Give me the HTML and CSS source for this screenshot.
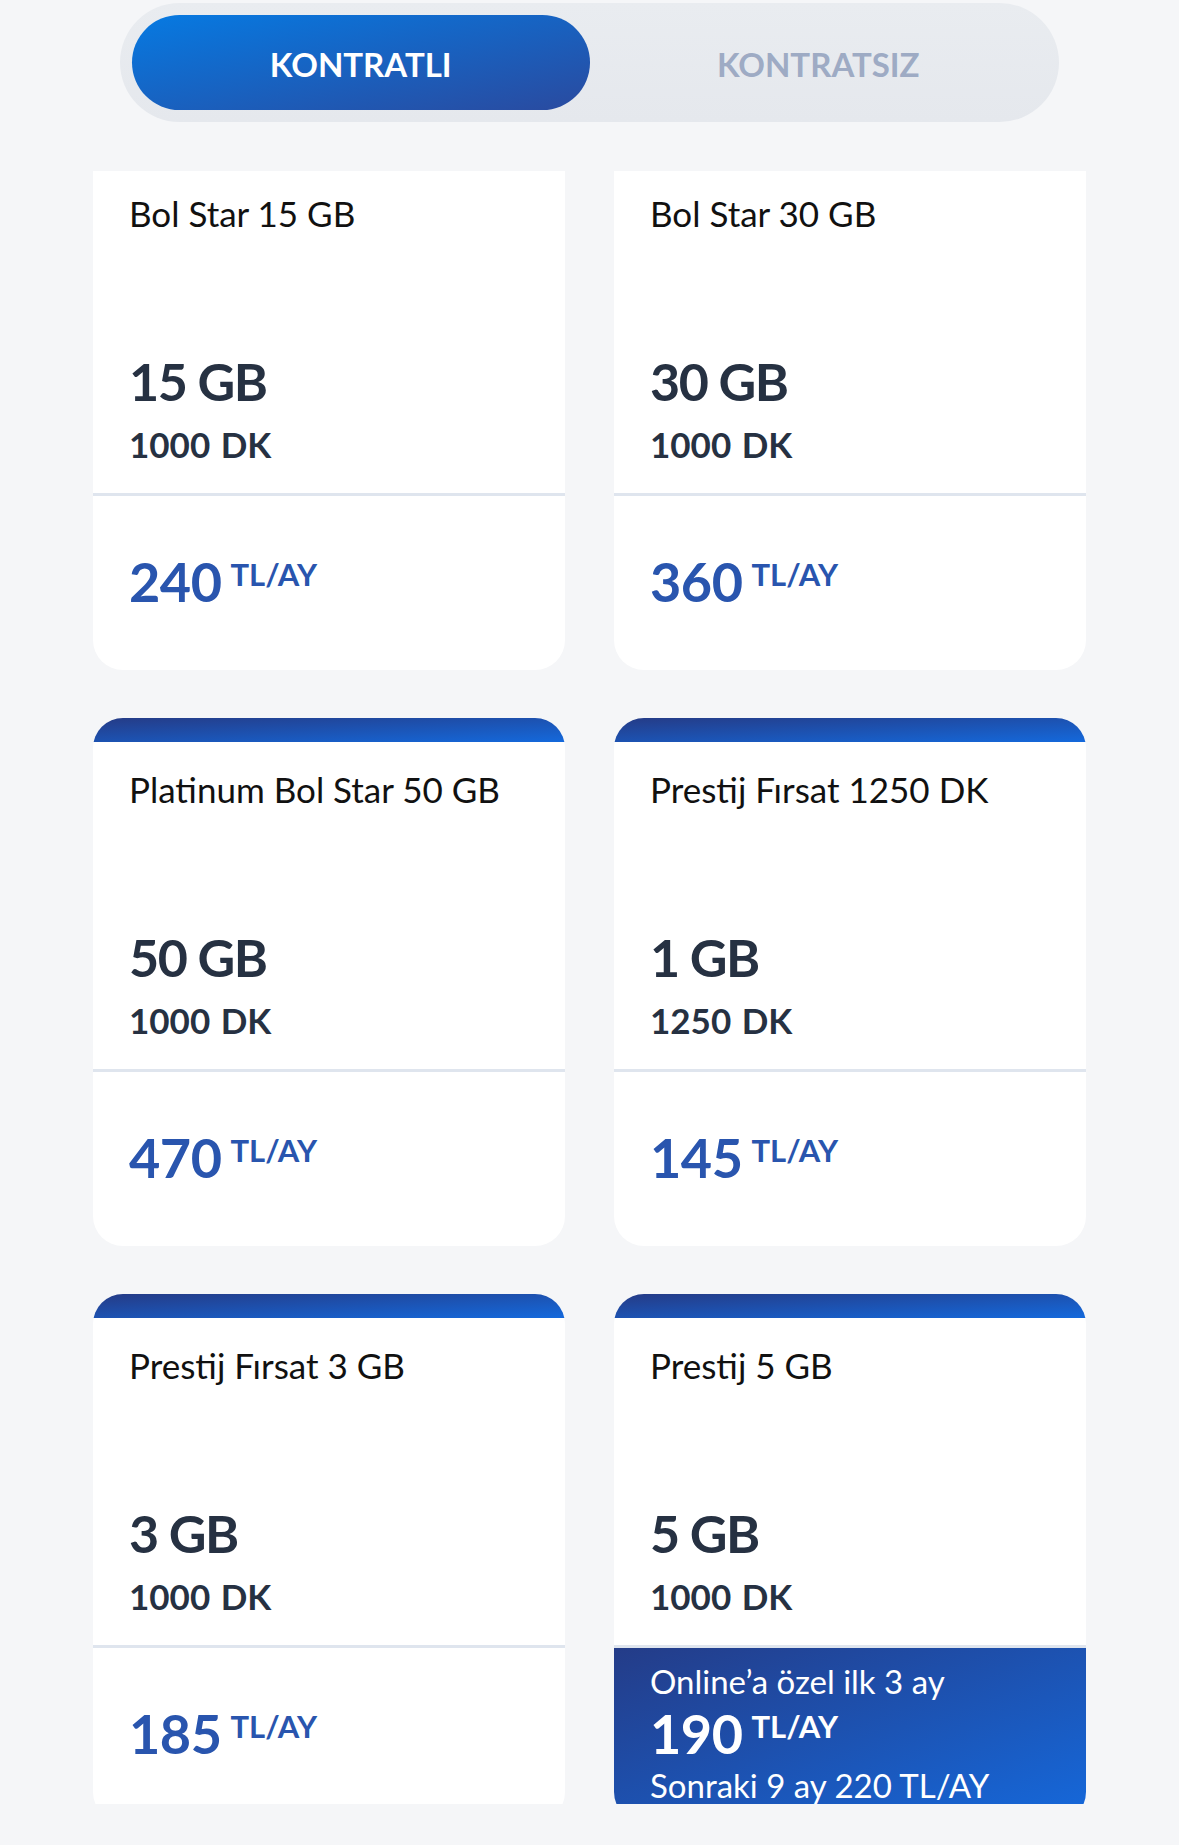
FILE: index.html
```html
<!DOCTYPE html>
<html lang="tr">
<head>
<meta charset="utf-8">
<title>Tarifeler</title>
<link rel="stylesheet" href="styles.css">
</head>
<body>
<div class="toggle">
  <div class="tab active">KONTRATLI</div>
  <div class="tab">KONTRATSIZ</div>
</div>
<div class="viewport">
  <div class="grid">
    <div class="card">
      <div class="card-bar"></div>
      <div class="card-top">
        <div class="title">Bol Star 15 GB</div>
        <div class="data">
          <div class="gb">15 GB</div>
          <div class="dk">1000 DK</div>
        </div>
      </div>
      <div class="card-price">
        <div class="price-line"><span class="amount">240</span><span class="unit">TL/AY</span></div>
      </div>
    </div>
    <div class="card">
      <div class="card-bar"></div>
      <div class="card-top">
        <div class="title">Bol Star 30 GB</div>
        <div class="data">
          <div class="gb">30 GB</div>
          <div class="dk">1000 DK</div>
        </div>
      </div>
      <div class="card-price">
        <div class="price-line"><span class="amount">360</span><span class="unit">TL/AY</span></div>
      </div>
    </div>
    <div class="card">
      <div class="card-bar"></div>
      <div class="card-top">
        <div class="title">Platinum Bol Star 50 GB</div>
        <div class="data">
          <div class="gb">50 GB</div>
          <div class="dk">1000 DK</div>
        </div>
      </div>
      <div class="card-price">
        <div class="price-line"><span class="amount">470</span><span class="unit">TL/AY</span></div>
      </div>
    </div>
    <div class="card">
      <div class="card-bar"></div>
      <div class="card-top">
        <div class="title">Prestij Fırsat 1250 DK</div>
        <div class="data">
          <div class="gb">1 GB</div>
          <div class="dk">1250 DK</div>
        </div>
      </div>
      <div class="card-price">
        <div class="price-line"><span class="amount">145</span><span class="unit">TL/AY</span></div>
      </div>
    </div>
    <div class="card">
      <div class="card-bar"></div>
      <div class="card-top">
        <div class="title">Prestij Fırsat 3 GB</div>
        <div class="data">
          <div class="gb">3 GB</div>
          <div class="dk">1000 DK</div>
        </div>
      </div>
      <div class="card-price">
        <div class="price-line"><span class="amount">185</span><span class="unit">TL/AY</span></div>
      </div>
    </div>
    <div class="card">
      <div class="card-bar"></div>
      <div class="card-top">
        <div class="title">Prestij 5 GB</div>
        <div class="data">
          <div class="gb">5 GB</div>
          <div class="dk">1000 DK</div>
        </div>
      </div>
      <div class="card-price promo">
        <div class="promo-note">Online’a özel ilk 3 ay</div>
        <div class="price-line"><span class="amount">190</span><span class="unit">TL/AY</span></div>
        <div class="promo-after">Sonraki 9 ay 220 TL/AY</div>
      </div>
    </div>
  </div>
</div>
</body>
</html>
```

FILE: styles.css
```css
html, body {
  margin: 0;
  background: #f5f6f8;
  font-family: Lato, "Noto Sans", sans-serif;
}

.toggle {
  margin: 3px 120px 0;
  padding: 12px;
  height: 95px;
  display: flex;
  background: linear-gradient(to bottom, #e9ecf0, #e5e8ed);
  border-radius: 60px;
}

.tab {
  flex: 1;
  display: flex;
  align-items: center;
  justify-content: center;
  padding-top: 3px;
  font-size: 33px;
  font-weight: 700;
  color: #9eabc4;
  border-radius: 48px;
}

.tab.active {
  background: linear-gradient(to bottom right, #067ae2, #2a4a9f);
  color: #fff;
}

.viewport {
  margin-top: 49px;
  height: 1633px;
  overflow: hidden;
}

.grid {
  margin-top: -29px;
  padding: 0 93px;
  display: grid;
  grid-template-columns: 1fr 1fr;
  column-gap: 49px;
  row-gap: 48px;
}

.card {
  height: 528px;
  background: #fff;
  border-radius: 30px;
  overflow: hidden;
  display: flex;
  flex-direction: column;
}

.card-bar {
  flex: none;
  height: 24px;
  background: linear-gradient(to bottom right, #253b86, #1469dc);
}

.card-top {
  flex: none;
  height: 330px;
  box-sizing: border-box;
  padding: 26px 36px 28px;
  border-bottom: 3px solid #dfe5ee;
  display: flex;
  flex-direction: column;
  justify-content: space-between;
}

.title {
  font-size: 35px;
  line-height: 42px;
  color: #111;
}

.gb {
  font-size: 52px;
  line-height: 52px;
  font-weight: 700;
  letter-spacing: -1.5px;
  color: #263142;
}

.dk {
  margin-top: 16px;
  font-size: 35px;
  line-height: 42px;
  font-weight: 700;
  color: #263142;
  word-spacing: 2px;
}

.card-price {
  flex: 1;
  padding: 59px 36px 0;
  color: #2955ae;
}

.price-line {
  font-size: 54px;
  line-height: 54px;
  font-weight: 700;
  letter-spacing: -0.5px;
}

.unit {
  margin-left: 9px;
  font-size: 31px;
  line-height: 1;
  letter-spacing: 0;
  vertical-align: 16px;
}

.card-price.promo {
  padding-top: 15px;
  color: #fff;
  background: linear-gradient(to bottom right, #243c88, #1569dc);
}

.promo-note {
  font-size: 33px;
  line-height: 36px;
}

.promo-note + .price-line {
  margin-top: 8px;
}

.promo-after {
  margin-top: 6px;
  font-size: 33px;
  line-height: 36px;
}
```
